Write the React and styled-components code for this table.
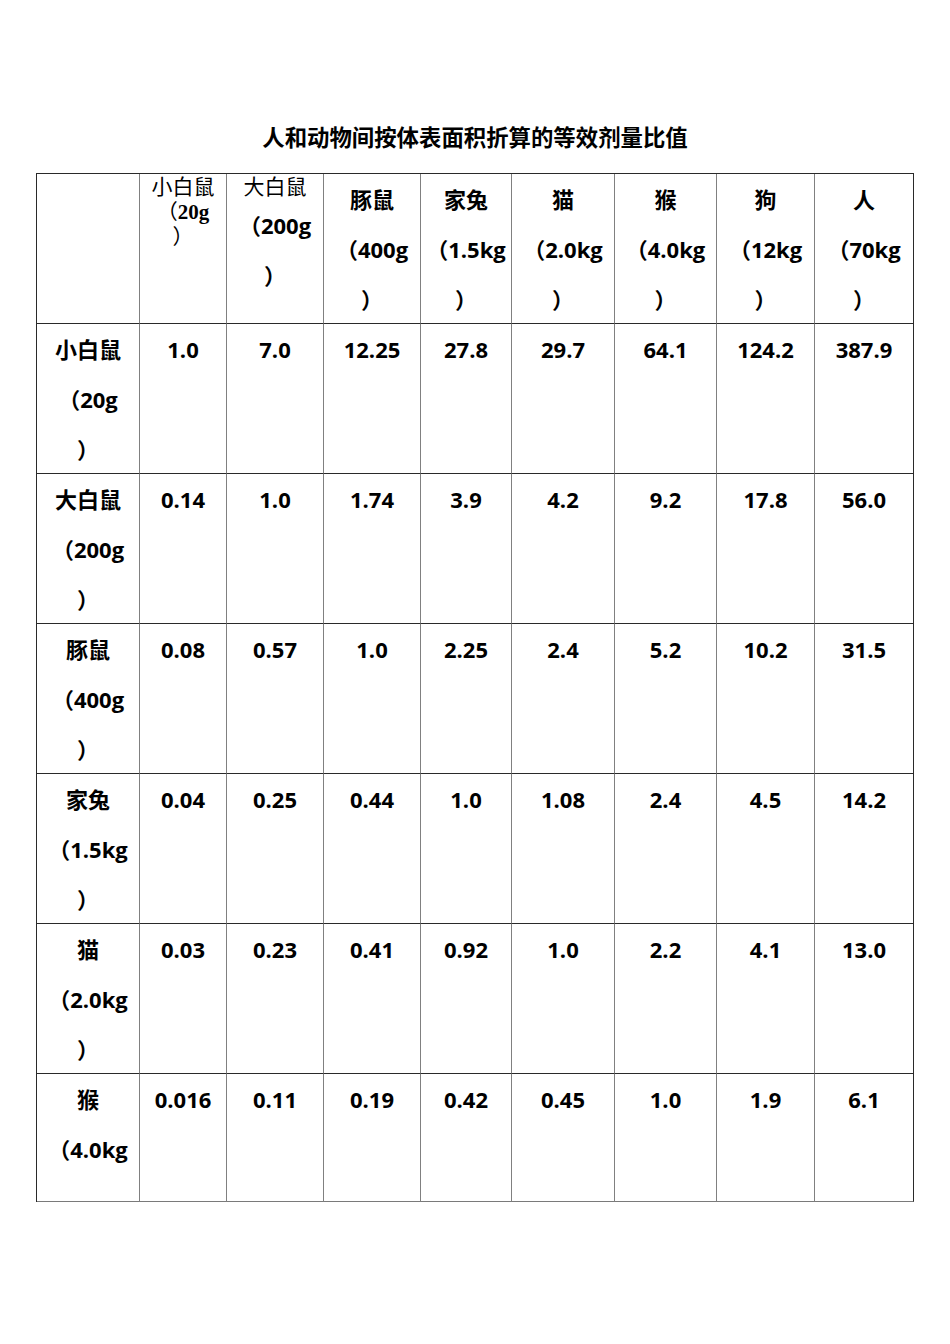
import React from "react";
import styled, { createGlobalStyle } from "styled-components";

const GlobalStyle = createGlobalStyle`
  body {
    margin: 0;
    background: #ffffff;
    color: #000000;
    font-family: "Open Sans", "Noto Sans CJK SC", sans-serif;
  }
`;

const Page = styled.div`
  width: 950px;
  height: 1344px;
  padding-top: 121px;
  box-sizing: border-box;
  display: flex;
  flex-direction: column;
  align-items: center;
`;

const Title = styled.h1`
  margin: 0 0 22px;
  font-size: 22.4px;
  line-height: 30px;
  font-weight: 700;
  font-family: "Noto Sans CJK SC", sans-serif;
`;

const Table = styled.table`
  width: 877px;
  table-layout: fixed;
  border-collapse: separate;
  border-spacing: 0;
  border-top: 1px solid #2a2a2a;
  border-left: 1px solid #2a2a2a;
  align-self: flex-start;
  margin-left: 36px;
`;

const Cell = styled.td`
  padding: 0;
  vertical-align: top;
  text-align: center;
  border-right: 1px solid ${(p) => (p.$last ? "#2a2a2a" : "#808080")};
  border-bottom: 1px solid ${(p) => (p.$bottom ? "#7a7a7a" : "#2a2a2a")};
`;

const Inner = styled.div`
  height: ${(p) => p.$h - 1}px;
  overflow: hidden;
`;

const Line = styled.div`
  font-size: 22px;
  font-weight: 700;
  line-height: 50px;
  white-space: nowrap;
`;

const SerifLine = styled.div`
  font-family: "Liberation Serif", "Noto Sans CJK SC", serif;
  font-size: 21px;
  font-weight: 400;
  color: #000;
  line-height: 25px;
  white-space: nowrap;
  padding-top: ${(p) => p.$pt || 0}px;
`;

const widths = [103, 87, 97, 97, 91, 103, 102, 98, 99];

const headers = [
  ["豚鼠", "（400g", "）"],
  ["家兔", "（1.5kg", "）"],
  ["猫", "（2.0kg", "）"],
  ["猴", "（4.0kg", "）"],
  ["狗", "（12kg", "）"],
  ["人", "（70kg", "）"],
];

const rows = [
  { name: ["小白鼠", "（20g", "）"], vals: ["1.0", "7.0", "12.25", "27.8", "29.7", "64.1", "124.2", "387.9"] },
  { name: ["大白鼠", "（200g", "）"], vals: ["0.14", "1.0", "1.74", "3.9", "4.2", "9.2", "17.8", "56.0"] },
  { name: ["豚鼠", "（400g", "）"], vals: ["0.08", "0.57", "1.0", "2.25", "2.4", "5.2", "10.2", "31.5"] },
  { name: ["家兔", "（1.5kg", "）"], vals: ["0.04", "0.25", "0.44", "1.0", "1.08", "2.4", "4.5", "14.2"] },
  { name: ["猫", "（2.0kg", "）"], vals: ["0.03", "0.23", "0.41", "0.92", "1.0", "2.2", "4.1", "13.0"] },
  { name: ["猴", "（4.0kg"], vals: ["0.016", "0.11", "0.19", "0.42", "0.45", "1.0", "1.9", "6.1"] },
];

export default function App() {
  return (
    <Page>
      <GlobalStyle />
      <Title>人和动物间按体表面积折算的等效剂量比值</Title>
      <Table>
        <colgroup>
          {widths.map((w, i) => (
            <col key={i} style={{ width: w }} />
          ))}
        </colgroup>
        <tbody>
          <tr>
            <Cell>
              <Inner $h={150} />
            </Cell>
            <Cell>
              <Inner $h={150}>
                <SerifLine $pt={1}>小白鼠</SerifLine>
                <SerifLine>
                  （<b>20g</b>
                </SerifLine>
                <SerifLine>）</SerifLine>
              </Inner>
            </Cell>
            <Cell>
              <Inner $h={150}>
                <SerifLine $pt={1}>大白鼠</SerifLine>
                <Line>（200g</Line>
                <Line>）</Line>
              </Inner>
            </Cell>
            {headers.map((h, i) => (
              <Cell key={i} $last={i === headers.length - 1}>
                <Inner $h={150}>
                  {h.map((t, j) => (
                    <Line key={j}>{t}</Line>
                  ))}
                </Inner>
              </Cell>
            ))}
          </tr>
          {rows.map((r, ri) => {
            const lastRow = ri === rows.length - 1;
            const h = lastRow ? 128 : 150;
            return (
              <tr key={ri}>
                <Cell $bottom={lastRow}>
                  <Inner $h={h}>
                    {r.name.map((t, j) => (
                      <Line key={j}>{t}</Line>
                    ))}
                  </Inner>
                </Cell>
                {r.vals.map((v, vi) => (
                  <Cell key={vi} $bottom={lastRow} $last={vi === r.vals.length - 1}>
                    <Inner $h={h}>
                      <Line>{v}</Line>
                    </Inner>
                  </Cell>
                ))}
              </tr>
            );
          })}
        </tbody>
      </Table>
    </Page>
  );
}
